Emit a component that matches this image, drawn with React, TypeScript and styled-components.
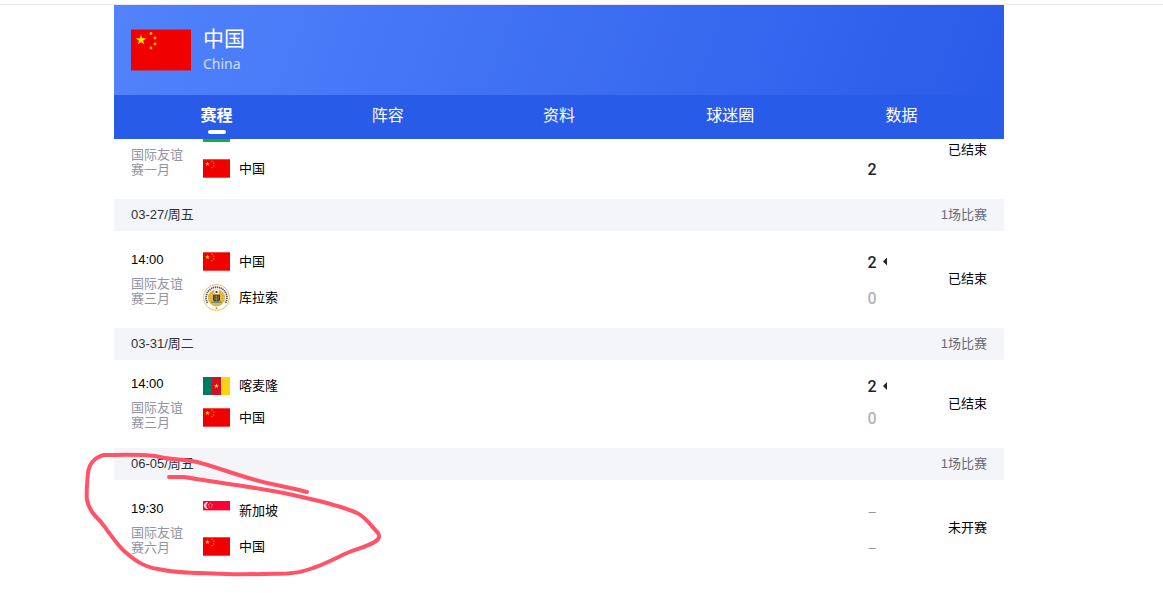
import React from 'react';
import styled, { createGlobalStyle } from 'styled-components';

const GlobalStyle = createGlobalStyle`
  * { box-sizing: border-box; }
  body {
    margin: 0;
    background: #fff;
    color: #000;
    font-family: "Liberation Sans", "Noto Sans CJK SC", sans-serif;
    font-size: 13px;
    line-height: 15px;
  }
  h1, h2, p, ul { margin: 0; padding: 0; font: inherit; list-style: none; }
`;

const TopRule = styled.div`
  height: 5px;
  border-bottom: 1px solid #e4e6eb;
`;

const Page = styled.main`
  margin: 0 159px 16px 114px;
`;

const Hero = styled.header`
  display: flex;
  align-items: center;
  gap: 12px;
  height: 90px;
  padding: 0 17px;
  background: linear-gradient(110deg, #5283fc 0%, #295be9 100%);
  color: #fff;
`;

const HeroNames = styled.div`
  display: flex;
  flex-direction: column;
  gap: 1px;
  padding-bottom: 1px;
`;

const HeroTitle = styled.h1`
  font-size: 21px;
  line-height: 28px;
`;

const HeroSubtitle = styled.p`
  font-family: "Noto Sans", sans-serif;
  font-size: 14px;
  line-height: 20px;
  opacity: 0.75;
`;

const Tabs = styled.nav`
  display: flex;
  height: 44px;
  padding: 0 17px;
  background: #295be9;
`;

const Tab = styled.button<{ $active?: boolean }>`
  flex: 1;
  display: flex;
  flex-direction: column;
  align-items: center;
  gap: 4px;
  padding: 11px 0 0;
  border: 0;
  background: none;
  color: #fff;
  font-family: inherit;
  font-size: 16px;
  line-height: 20px;
  font-weight: ${(p) => (p.$active ? 700 : 400)};
  cursor: pointer;

  &::after {
    content: "";
    width: 18px;
    height: 4px;
    border-radius: 2px;
    background: ${(p) => (p.$active ? '#fff' : 'transparent')};
  }
`;

const Clipped = styled.section`
  display: flex;
  flex-direction: column;
  justify-content: flex-end;
  height: 60px;
  overflow: hidden;
`;

const Day = styled.section`
  position: relative;
`;

const DayBar = styled.div`
  display: flex;
  justify-content: space-between;
  align-items: center;
  height: 32px;
  padding: 0 17px 2px;
  background: #f4f5f9;
`;

const DayTitle = styled.h2`
  color: #303135;
`;

const DayCount = styled.span`
  color: #686b78;
`;

const MatchRow = styled.article`
  flex: none;
  display: flex;
  align-items: center;
  padding: 17px;
`;

const MatchInfo = styled.div`
  display: flex;
  flex-direction: column;
  gap: 9px;
  width: 72px;
  margin: -1px 0 1px;
  padding-right: 19px;
`;

const Competition = styled.p`
  color: #9395a3;
`;

const Teams = styled.ul`
  flex: 1;
  display: flex;
  flex-direction: column;
  gap: 9px;
`;

const Team = styled.li`
  display: flex;
  align-items: center;
  gap: 9px;
`;

const TeamName = styled.span`
  flex: 1;
  padding-bottom: 1px;
`;

const Score = styled.span<{ $muted?: boolean }>`
  width: 10px;
  padding-top: 2px;
  text-align: center;
  font-family: Roboto, sans-serif;
  font-size: 16px;
  line-height: 16px;
  font-weight: 500;
  color: ${(p) => (p.$muted ? '#b1b3bb' : '#222328')};
`;

const PendingScore = styled(Score)`
  font-family: inherit;
  font-size: 13px;
  color: #8d8f9b;
`;

const WinnerMark = styled.span<{ $visible?: boolean }>`
  width: 4px;
  height: 8px;
  margin-left: -3px;
  background: ${(p) => (p.$visible ? '#222328' : 'transparent')};
  clip-path: polygon(100% 0, 100% 100%, 0 50%);
`;

const Status = styled.span`
  width: 100px;
  padding-bottom: 2px;
  text-align: right;
`;

const FlagImage = styled.svg`
  display: block;
  flex: none;
`;

const Annotation = styled.svg`
  position: absolute;
  left: -34px;
  top: 0;
  pointer-events: none;
`;

const starPoints = (cx: number, cy: number, r: number) =>
  Array.from({ length: 10 }, (_, i) => {
    const radius = i % 2 ? r * 0.382 : r;
    const a = -Math.PI / 2 + (i * Math.PI) / 5;
    return `${cx + radius * Math.cos(a)},${cy + radius * Math.sin(a)}`;
  }).join(' ');

type FlagName = 'china' | 'curacao' | 'cameroon' | 'singapore' | 'green';

function ChinaFlag({ size }: { size: number }) {
  return (
    <FlagImage width={size} height={size} viewBox="0 0 60 60" role="img" aria-label="中国">
      <rect y="9" width="60" height="42" fill="#f10000" opacity=".45" />
      <rect y="10" width="60" height="40" fill="#f10000" />
      <g fill="#ffde00">
        <polygon points={starPoints(10, 20, 5.6)} />
      </g>
      <g fill="#ffb400">
        <circle cx="20" cy="13.5" r="1.4" />
        <circle cx="24" cy="18" r="1.4" />
        <circle cx="24" cy="24" r="1.4" />
        <circle cx="20" cy="28" r="1.4" />
      </g>
    </FlagImage>
  );
}

function Flag({ name }: { name: FlagName }) {
  switch (name) {
    case 'china':
      return <ChinaFlag size={27} />;
    case 'cameroon':
      return (
        <FlagImage width="27" height="18" viewBox="0 0 27 18" aria-hidden="true">
          <rect width="9" height="18" fill="#007a5e" />
          <rect x="9" width="9" height="18" fill="#ce1126" />
          <rect x="18" width="9" height="18" fill="#fcd116" />
          <polygon points={starPoints(13.5, 9, 2.6)} fill="#fcd116" />
        </FlagImage>
      );
    case 'singapore':
      return (
        <FlagImage width="27" height="27" viewBox="0 0 27 27" aria-hidden="true">
          <rect y="4" width="27" height="9" fill="#ff0030" />
          <rect y="13" width="27" height="1" fill="#ffa6b6" />
          <path d="M5.2 5.2a3.5 3.5 0 1 0 0 6.8 4 4 0 0 1 0-6.8z" fill="#ffd0d8" />
          <g fill="#ff8fa3">
            <circle cx="7.2" cy="6.4" r=".7" />
            <circle cx="9.1" cy="7.8" r=".7" />
            <circle cx="5.6" cy="7.8" r=".7" />
            <circle cx="8.5" cy="10" r=".7" />
            <circle cx="6.2" cy="10" r=".7" />
          </g>
        </FlagImage>
      );
    case 'curacao':
      return (
        <FlagImage width="27" height="27" viewBox="0 0 27 27" aria-hidden="true">
          <circle cx="13.5" cy="13.5" r="13" fill="#fff" stroke="#e6c25a" />
          <path
            d="M4.6 19a10.4 10.4 0 1 1 17.8 0"
            fill="none"
            stroke="#5b5d78"
            strokeWidth="1.8"
            strokeDasharray="1.4 .6"
          />
          <circle cx="13.5" cy="13.8" r="8.6" fill="#e3b73c" />
          <circle cx="13.5" cy="7.8" r="2.5" fill="#f4f4ee" />
          <circle cx="13.5" cy="8" r="1.1" fill="#2d3035" />
          <path d="M10 10.8h7v5.2l-1 1.5h-5l-1-1.5z" fill="#343a58" />
          <path d="M12 11.5v5M13.5 11.5v5.5M15.1 11.5v5" stroke="#c09a3c" strokeWidth=".7" />
          <path d="M8.5 18.2h10" fill="none" stroke="#6f8a6a" strokeWidth="1.4" />
          <path d="M9.5 20h8" fill="none" stroke="#b9c27a" />
          <circle cx="13.5" cy="24.3" r="1" fill="#b58a55" />
        </FlagImage>
      );
    case 'green':
      return (
        <FlagImage width="27" height="27" viewBox="0 0 27 27" aria-hidden="true">
          <rect y="5" width="27" height="18" fill="#12b32b" />
        </FlagImage>
      );
  }
}

interface Side {
  flag: FlagName;
  name?: string;
  score?: string;
  muted?: boolean;
  winner?: boolean;
  pending?: boolean;
}

interface MatchData {
  time?: string;
  competition: string;
  status: string;
  sides: Side[];
}

function Match({ match }: { match: MatchData }) {
  return (
    <MatchRow>
      <MatchInfo>
        <p>{match.time ?? '\u00a0'}</p>
        <Competition>{match.competition}</Competition>
      </MatchInfo>
      <Teams>
        {match.sides.map((side) => (
          <Team key={side.flag}>
            <Flag name={side.flag} />
            <TeamName>{side.name}</TeamName>
            {side.pending ? (
              <PendingScore>–</PendingScore>
            ) : (
              <Score $muted={side.muted}>{side.score}</Score>
            )}
            <WinnerMark $visible={side.winner} />
          </Team>
        ))}
      </Teams>
      <Status>{match.status}</Status>
    </MatchRow>
  );
}

const tabs = ['赛程', '阵容', '资料', '球迷圈', '数据'];

const januaryMatch: MatchData = {
  competition: '国际友谊赛一月',
  status: '已结束',
  sides: [{ flag: 'green' }, { flag: 'china', name: '中国', score: '2' }],
};

const days: { date: string; match: MatchData; circled?: boolean }[] = [
  {
    date: '03-27/周五',
    match: {
      time: '14:00',
      competition: '国际友谊赛三月',
      status: '已结束',
      sides: [
        { flag: 'china', name: '中国', score: '2', winner: true },
        { flag: 'curacao', name: '库拉索', score: '0', muted: true },
      ],
    },
  },
  {
    date: '03-31/周二',
    match: {
      time: '14:00',
      competition: '国际友谊赛三月',
      status: '已结束',
      sides: [
        { flag: 'cameroon', name: '喀麦隆', score: '2', winner: true },
        { flag: 'china', name: '中国', score: '0', muted: true },
      ],
    },
  },
  {
    date: '06-05/周五',
    circled: true,
    match: {
      time: '19:30',
      competition: '国际友谊赛六月',
      status: '未开赛',
      sides: [
        { flag: 'singapore', name: '新加坡', pending: true },
        { flag: 'china', name: '中国', pending: true },
      ],
    },
  },
];

export default function App() {
  return (
    <>
      <GlobalStyle />
      <TopRule />
      <Page>
        <Hero>
          <ChinaFlag size={60} />
          <HeroNames>
            <HeroTitle>中国</HeroTitle>
            <HeroSubtitle>China</HeroSubtitle>
          </HeroNames>
        </Hero>
        <Tabs>
          {tabs.map((label, i) => (
            <Tab key={label} type="button" $active={i === 0}>
              {label}
            </Tab>
          ))}
        </Tabs>
        <Clipped>
          <Match match={januaryMatch} />
        </Clipped>
        {days.map((day) => (
          <Day key={day.date}>
            <DayBar>
              <DayTitle>{day.date}</DayTitle>
              <DayCount>1场比赛</DayCount>
            </DayBar>
            <Match match={day.match} />
            {day.circled && (
              <Annotation width="310" height="132" viewBox="80 448 310 132" aria-hidden="true">
                <path
                  d="M307 492C293 488 280 486 267 483C241 477 217 467 197 462C182 459 170 460 155 456C138 454 118 455 104 455C96 457 89 463 88 473C87 484 86 493 87 500C89 510 95 516 101 522C108 531 115 542 123 550C133 559 143 567 158 569C175 573 194 573 213 573.5C238 575 263 574 287 573.5C297 573 305 571 313 568C325 564 336 558 347 553C357 549 369 546 376 541C379 539 380 536 378 533C371 526 366 517 357 513C337 504 314 500 293 495C256 487 220 483 184 477L169 477"
                  fill="none"
                  stroke="#ff5468"
                  strokeWidth="4"
                  strokeLinecap="round"
                  strokeLinejoin="round"
                />
              </Annotation>
            )}
          </Day>
        ))}
      </Page>
    </>
  );
}
